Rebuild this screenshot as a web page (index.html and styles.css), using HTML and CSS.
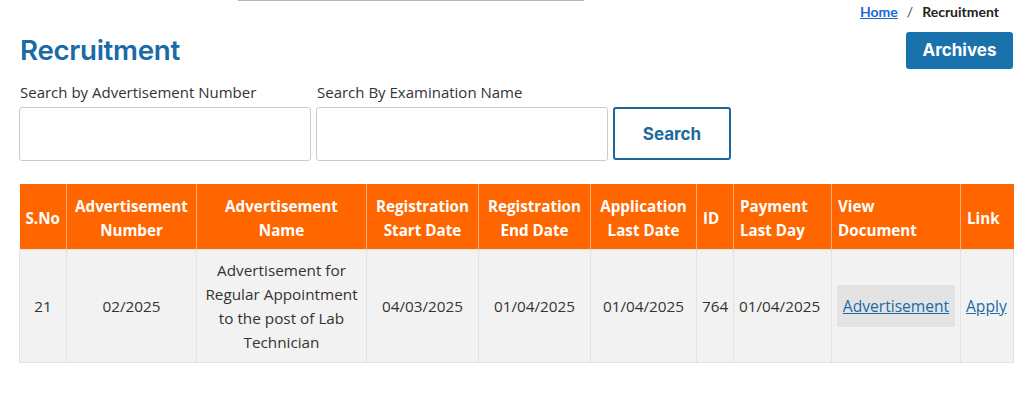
FILE: index.html
```html
<!DOCTYPE html>
<html lang="en">
<head>
<meta charset="utf-8">
<title>Recruitment</title>
<link rel="stylesheet" href="styles.css">
</head>
<body>
<div class="topline"></div>
<div class="page">
  <nav class="crumbs"><a href="#">Home</a><span class="sep">/</span><span class="cur">Recruitment</span></nav>
  <div class="titlebar">
    <h1>Recruitment</h1>
    <a class="archives" href="#">Archives</a>
  </div>
  <form class="search">
    <label class="field"><span>Search by Advertisement Number</span><input type="text"></label>
    <label class="field"><span>Search By Examination Name</span><input type="text"></label>
    <button type="button" class="btn-search">Search</button>
  </form>
  <table class="grid">
    <colgroup>
      <col style="width:47px"><col style="width:130px"><col style="width:170px"><col style="width:112px"><col style="width:112px"><col style="width:106px"><col style="width:37px"><col style="width:98px"><col style="width:129px"><col style="width:53px">
    </colgroup>
    <thead>
      <tr>
        <th>S.No</th><th class="c">Advertisement Number</th><th class="c">Advertisement Name</th><th class="c">Registration Start Date</th><th class="c">Registration End Date</th><th class="c">Application Last Date</th><th>ID</th><th>Payment Last Day</th><th>View Document</th><th>Link</th>
      </tr>
    </thead>
    <tbody>
      <tr>
        <td class="c">21</td><td class="c">02/2025</td><td class="c">Advertisement for Regular Appointment to the post of Lab Technician</td><td class="c">04/03/2025</td><td class="c">01/04/2025</td><td class="c">01/04/2025</td><td>764</td><td>01/04/2025</td><td class="doc"><a class="docbtn" href="#">Advertisement</a></td><td class="lnk"><a href="#">Apply</a></td>
      </tr>
    </tbody>
  </table>
</div>
</body>
</html>
```
FILE: styles.css
```css
* { box-sizing: border-box; }
html, body { margin: 0; padding: 0; background: #fff; }
body { font-family: "Open Sans", "Noto Sans", sans-serif; color: #333; font-size: 15px; }
.topline { margin-left: 238px; width: 346px; height: 1px; background: #b5b5b5; }
.page { padding: 0 11px 0 19px; }
.crumbs { display: flex; justify-content: flex-end; align-items: baseline; gap: 9px; padding: 2px 14px 0 0; font-family: "Lato", sans-serif; font-weight: 700; font-size: 14px; line-height: 18px; color: #222; }
.crumbs a { color: #1a66d6; text-decoration: underline; }
.crumbs .sep { color: #444; font-weight: 400; }
.titlebar { display: flex; justify-content: space-between; align-items: flex-start; margin-top: 11px; }
h1 { margin: 1px 0 0 1px; font-family: "Inter", sans-serif; font-weight: 600; font-size: 27.7px; line-height: 34px; color: #1a6aa6; letter-spacing: -0.3px; }
.archives { display: block; margin-top: 0; width: 107px; height: 37px; line-height: 36px; text-align: center; background: #1a72ad; color: #fff; text-decoration: none; font-family: "Inter", sans-serif; font-weight: 700; font-size: 17px; border-radius: 3px; }
.search { display: flex; align-items: flex-end; gap: 5px; margin-top: 13px; }
.field { display: flex; flex-direction: column; width: 292px; }
.field span { font-size: 15px; line-height: 20px; color: #333; margin-bottom: 5px; margin-left: 1px; }
.field input { width: 292px; height: 54px; border: 1px solid #c8ccd0; border-radius: 3px; background: #fff; }
.btn-search { width: 118px; height: 53px; margin-bottom: 1px; background: #fff; border: 2px solid #1c6a9c; border-radius: 3px; color: #1c6a9c; font-family: "Inter", sans-serif; font-weight: 700; font-size: 17px; cursor: pointer; }
.grid { margin-top: 23px; width: 994px; border-collapse: collapse; table-layout: fixed; }
.grid th { background: #ff6600; color: #fff; font-weight: 700; font-size: 15.2px; line-height: 24px; height: 65px; padding: 3px 6px 0; text-align: left; border-left: 1px solid #ffb07a; vertical-align: middle; }
.grid th:first-child { border-left: none; }
.grid th.c { text-align: center; padding: 3px 7px 0; }
.grid td { background: #f2f2f2; font-size: 15.3px; line-height: 24px; padding: 8px 5px; height: 112px; border: 1px solid #e2e2e2; vertical-align: middle; text-align: left; }
.grid td.c { text-align: center; }
.grid td.doc { padding: 0 5px; }
.docbtn { display: block; height: 42px; line-height: 42px; text-align: center; background: #e3e3e3; color: #1a6aa6; text-decoration: underline; font-size: 15.6px; }
.lnk a { color: #1a6aa6; text-decoration: underline; font-size: 15.6px; }
```
